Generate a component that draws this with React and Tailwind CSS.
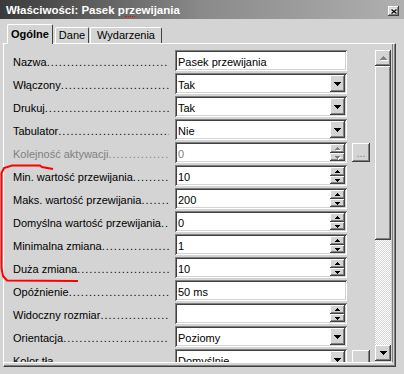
import React from "react";

// classic 3D borders, drawn with inset shadows so they take no layout space
const raised =
  "shadow-[inset_-1px_-1px_#404040,inset_1px_1px_#ffffff,inset_-2px_-2px_#808080,inset_2px_2px_#d4d4d4]";
const sunken =
  "shadow-[inset_1px_1px_#808080,inset_-1px_-1px_#ffffff,inset_2px_2px_#404040,inset_-2px_-2px_#d4d4d4]";

const DOTS = ".".repeat(60);

const rows = [
  { label: "Nazwa", value: "Pasek przewijania", kind: "text" },
  { label: "Włączony", value: "Tak", kind: "list" },
  { label: "Drukuj", value: "Tak", kind: "list" },
  { label: "Tabulator", value: "Nie", kind: "list" },
  { label: "Kolejność aktywacji", value: "0", kind: "spin", disabled: true, more: true },
  { label: "Min. wartość przewijania", value: "10", kind: "spin" },
  { label: "Maks. wartość przewijania", value: "200", kind: "spin" },
  { label: "Domyślna wartość przewijania", value: "0", kind: "spin" },
  { label: "Minimalna zmiana", value: "1", kind: "spin" },
  { label: "Duża zmiana", value: "10", kind: "spin" },
  { label: "Opóźnienie", value: "50 ms", kind: "text" },
  { label: "Widoczny rozmiar", value: "", kind: "spin" },
  { label: "Orientacja", value: "Poziomy", kind: "list" },
  { label: "Kolor tła", value: "Domyślnie", kind: "list", more: true },
];

// pixel triangles, built from 1px rows so they stay crisp
function Tri({ w, up, color, etched }) {
  const h = Math.ceil(w / 2);
  const bars = [];
  for (let i = 0; i < h; i++) {
    const row = up ? h - 1 - i : i;
    bars.push({ x: i, y: row, width: w - i * 2 });
  }
  return (
    <svg width={w + 1} height={h + 1} shapeRendering="crispEdges">
      {etched &&
        bars.map((b, i) => (
          <rect key={"s" + i} x={b.x + 1} y={b.y + 1} width={b.width} height={1} fill="#ffffff" />
        ))}
      {bars.map((b, i) => (
        <rect key={i} x={b.x} y={b.y} width={b.width} height={1} fill={color} />
      ))}
    </svg>
  );
}

function DropButton() {
  return (
    <div className={`flex w-[15px] items-center justify-center bg-[#d4d4d4] pl-[1px] pt-[2px] ${raised}`}>
      <Tri w={7} color="#000000" />
    </div>
  );
}

function Spin({ disabled }) {
  const c = disabled ? "#808080" : "#000000";
  return (
    <div className="flex w-[15px] flex-col">
      <div className={`flex h-[9px] items-center justify-center bg-[#d4d4d4] pl-[1px] pt-[1px] ${raised}`}>
        <Tri w={5} up color={c} etched={disabled} />
      </div>
      <div className={`flex h-[8px] items-center justify-center bg-[#d4d4d4] pl-[1px] pt-[1px] ${raised}`}>
        <Tri w={5} color={c} etched={disabled} />
      </div>
    </div>
  );
}

function Row({ r }) {
  return (
    <div className="flex h-[21px] shrink-0 items-start">
      <div
        className={`w-[156px] overflow-hidden whitespace-nowrap pt-[4px] leading-[17px] ${
          r.disabled ? "text-[#808080]" : "text-black"
        }`}
      >
        {r.label}
        <span className="tracking-[1px]">{DOTS}</span>
      </div>
      <div className={`ml-[6px] flex h-[21px] w-[172px] bg-white p-[2px] ${sunken}`}>
        <div
          className={`flex-1 overflow-hidden whitespace-nowrap pl-[1px] pt-[4px] leading-[13px] ${
            r.disabled ? "text-[#808080]" : "text-black"
          }`}
        >
          {r.value}
        </div>
        {r.kind === "list" && <DropButton />}
        {r.kind === "spin" && <Spin disabled={r.disabled} />}
      </div>
      {r.more && (
        <div
          className={`ml-[5px] mt-[1px] flex h-[19px] w-[18px] items-end justify-center overflow-hidden bg-[#d4d4d4] pb-[3px] leading-[11px] text-[#808080] ${raised}`}
        >
          ...
        </div>
      )}
    </div>
  );
}

function Scrollbar() {
  return (
    <div className="flex w-[16px] flex-col pt-[6px]">
      <div className={`flex h-[16px] items-center justify-center bg-[#d4d4d4] pl-[1px] ${raised}`}>
        <Tri w={7} up color="#808080" etched />
      </div>
      <div className={`h-[174px] bg-[#d4d4d4] ${raised}`} />
      <div className="h-[105px] bg-[image:repeating-conic-gradient(#ffffff_0%_25%,#d4d4d4_0%_50%)] bg-[length:2px_2px]" />
      <div className={`flex h-[16px] items-center justify-center bg-[#d4d4d4] pl-[1px] pt-[1px] ${raised}`}>
        <Tri w={7} color="#000000" />
      </div>
    </div>
  );
}

export default function App() {
  return (
    <div className="relative h-[374px] w-[404px] overflow-hidden bg-[#d4d4d4] font-['Liberation_Sans',Arial,sans-serif] text-[11px] text-black">
      {/* title bar */}
      <div className="flex h-[19px] items-start justify-between bg-gradient-to-r from-[#3a3a3a] via-[#8a8a8a] to-[#b0b0b0] pl-[6px] pr-[5px]">
        <div className="pt-[3px] text-[11.5px] font-bold leading-[14px] text-white">
          Właściwości: Pasek p
          <span className="border-b border-dotted border-[#ff0000]">rz</span>
          ewijania
        </div>
        <div className={`mt-[6px] flex h-[10px] w-[11px] items-center justify-center bg-[#e4e4e4] ${raised}`}>
          <svg width="6" height="5" viewBox="0 0 6 5">
            <path d="M0.5 0.5 L5.5 4.5 M5.5 0.5 L0.5 4.5" stroke="#000" strokeWidth="1.2" />
          </svg>
        </div>
      </div>

      {/* tabs */}
      <div className="mt-[5px] flex h-[19px] items-end pl-[7px]">
        <div className="relative z-10 -mb-px flex h-[20px] w-[46px] items-start justify-center rounded-t-[2px] border-l border-t border-r border-l-white border-t-white border-r-[#404040] bg-[#d4d4d4] pt-[3px] font-bold leading-[13px]">
          Ogólne
        </div>
        <div className="ml-[2px] flex h-[16px] w-[34px] items-start justify-center rounded-t-[2px] border-l border-t border-r border-l-white border-t-white border-r-[#404040] pt-[1px] leading-[13px]">
          Dane
        </div>
        <div className="ml-[1px] flex h-[16px] w-[72px] items-start justify-center rounded-t-[2px] border-l border-t border-r border-l-white border-t-white border-r-[#404040] pt-[1px] leading-[13px]">
          Wydarzenia
        </div>
      </div>

      {/* tab page */}
      <div className="ml-[3px] w-[393px] border-l border-t border-r border-b border-l-white border-t-white border-r-[#404040] border-b-[#404040]">
        <div className="border-r border-b border-r-[#808080] border-b-[#808080] pb-[2px]">
          <div className="flex h-[319px] w-[389px] border-r border-b border-r-[#808080] border-b-white">
            <div className="flex w-[371px] flex-col gap-[2px] overflow-hidden pl-[9px] pt-[6px]">
              {rows.map((r) => (
                <Row key={r.label} r={r} />
              ))}
            </div>
            <Scrollbar />
          </div>
        </div>
      </div>

      {/* red hand-drawn mark over the rows */}
      <svg className="pointer-events-none absolute left-0 top-0" width="404" height="374">
        <path
          d="M53 169 L42 167 L40 165.5 L12 165.5 L4 168 L1.5 173 L1.5 268 L3 276 L7 280.5 L78 281"
          fill="none"
          stroke="#ff0000"
          strokeWidth="2"
        />
      </svg>
    </div>
  );
}
